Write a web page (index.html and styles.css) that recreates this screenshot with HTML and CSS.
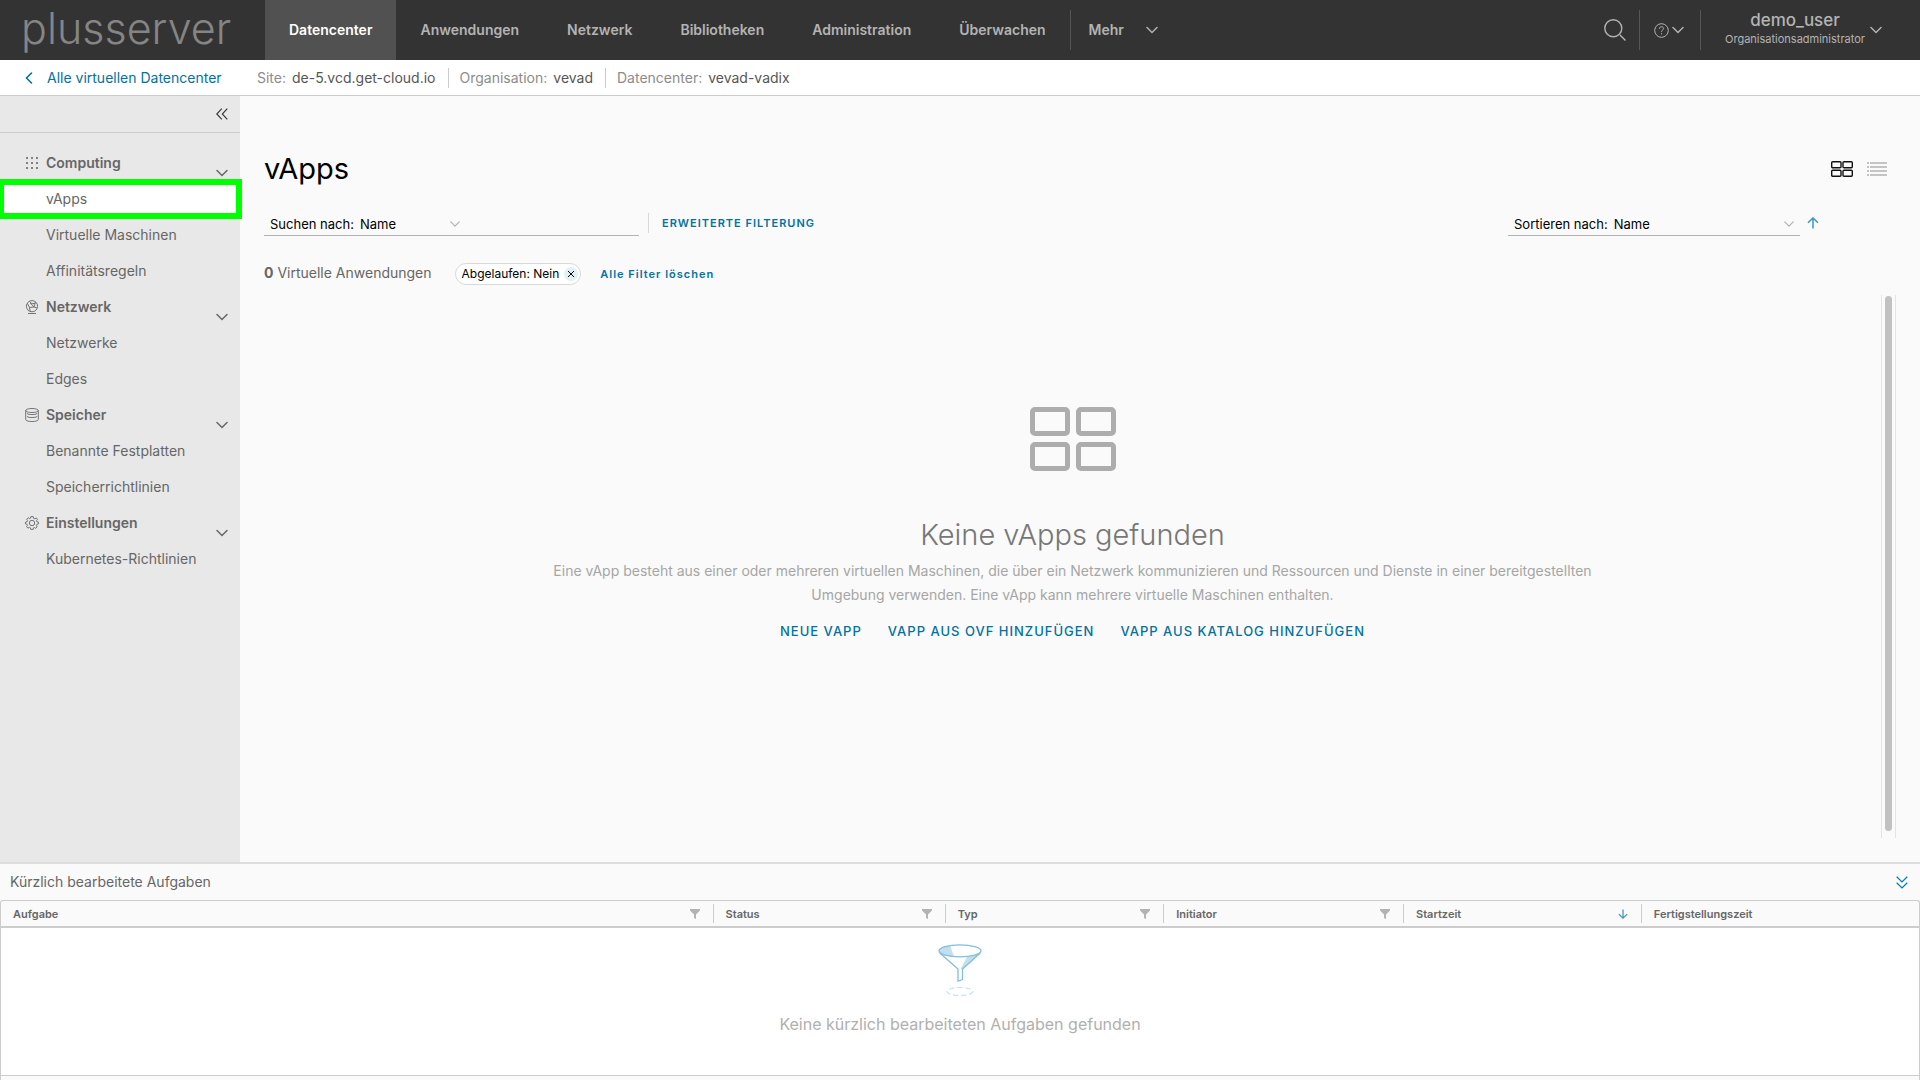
FILE: index.html
```html
<!DOCTYPE html>
<html lang="de">
<head>
<meta charset="utf-8">
<meta name="viewport" content="width=device-width, initial-scale=1">
<title>vApps – plusserver</title>
<link rel="stylesheet" href="styles.css">
</head>
<body>
<svg class="defs" aria-hidden="true">
  <symbol id="chevron" viewBox="0 0 12 8"><path d="M1 1.5 6 6.5 11 1.5" fill="none" stroke="currentColor" stroke-width="1.5" stroke-linecap="round"/></symbol>
  <symbol id="filter" viewBox="0 0 10 10"><path d="M0 0H10V1.5L6 5.5V10L4 9V5.5L0 1.5Z" fill="currentColor"/></symbol>
  <symbol id="arrow" viewBox="0 0 12 12"><path d="M6 11.5V1M1 5.8 6 1 11 5.8" fill="none" stroke="currentColor" stroke-width="1.5"/></symbol>
</svg>

<header class="topbar">
  <a class="brand" href="#">plusserver</a>
  <nav class="tabs" aria-label="Hauptnavigation">
    <a class="tab tab-active" href="#">Datencenter</a>
    <a class="tab" href="#">Anwendungen</a>
    <a class="tab" href="#">Netzwerk</a>
    <a class="tab" href="#">Bibliotheken</a>
    <a class="tab" href="#">Administration</a>
    <a class="tab" href="#">Überwachen</a>
    <button class="more" type="button">Mehr <svg class="chevron"><use href="#chevron"/></svg></button>
  </nav>
  <div class="tools">
    <button class="tool tool-search" type="button" aria-label="Suchen">
      <svg width="22" height="22" viewBox="0 0 22 22" fill="none" stroke="currentColor" stroke-width="1.4"><circle cx="9.3" cy="9.3" r="8.5"/><path d="M16 16 21.5 21.5"/></svg>
    </button>
    <button class="tool tool-help" type="button" aria-label="Hilfe">
      <svg width="15" height="15" viewBox="0 0 15 15" fill="none" stroke="currentColor"><circle cx="7.5" cy="7.5" r="6.8"/><path d="M5.3 5.8C5.3 4.4 6.3 3.8 7.5 3.8S9.6 4.5 9.6 5.6C9.6 7 7.5 7 7.5 8.8M7.5 10.2V11.4"/></svg>
      <svg class="chevron"><use href="#chevron"/></svg>
    </button>
    <button class="tool tool-user" type="button">
      <span class="user"><span class="user-name">demo_user</span><span class="user-role">Organisationsadministrator</span></span>
      <svg class="chevron"><use href="#chevron"/></svg>
    </button>
  </div>
</header>

<div class="context">
  <a class="back" href="#"><svg width="8" height="12" viewBox="0 0 8 12"><path d="M6.5 1 1.5 6 6.5 11" fill="none" stroke="currentColor" stroke-width="1.6" stroke-linecap="round"/></svg>Alle virtuellen Datencenter</a>
  <dl class="facts">
    <div class="fact"><dt>Site:</dt><dd>de-5.vcd.get-cloud.io</dd></div>
    <div class="fact"><dt>Organisation:</dt><dd>vevad</dd></div>
    <div class="fact"><dt>Datencenter:</dt><dd>vevad-vadix</dd></div>
  </dl>
</div>

<div class="workspace">
  <aside class="sidebar">
    <div class="sidebar-head">
      <button class="collapse" type="button" aria-label="Navigation einklappen"><svg width="12" height="12" viewBox="0 0 12 12" fill="none" stroke="currentColor" stroke-width="1.1"><path d="M5.8.7.8 6 5.8 11.3M11.3.7 6.3 6 11.3 11.3"/></svg></button>
    </div>
    <nav class="menu" aria-label="Datencenter">
      <button class="group" type="button">
        <svg width="14" height="14" viewBox="0 0 14 14" fill="currentColor"><path d="M1 1h2v2H1zM6 1h2v2H6zM11 1h2v2h-2zM1 6h2v2H1zM6 6h2v2H6zM11 6h2v2h-2zM1 11h2v2H1zM6 11h2v2H6zM11 11h2v2h-2z" opacity=".8"/></svg>
        Computing<svg class="chevron"><use href="#chevron"/></svg></button>
      <a class="item item-active" href="#">vApps</a>
      <a class="item" href="#">Virtuelle Maschinen</a>
      <a class="item" href="#">Affinitätsregeln</a>
      <button class="group" type="button">
        <svg width="14" height="14" viewBox="0 0 14 14" fill="none" stroke="currentColor" stroke-width=".9"><circle cx="7" cy="6.2" r="5.6"/><path d="M3 13.5H11M2.5 3.5 4.500 7.500 9 7 10.500 2M4.500 7.500 5 11.2M9 7 12 8M4.5 1.5 7 3.8 10.2 3.2M9 7 5.2 3"/></svg>
        Netzwerk<svg class="chevron"><use href="#chevron"/></svg></button>
      <a class="item" href="#">Netzwerke</a>
      <a class="item" href="#">Edges</a>
      <button class="group" type="button">
        <svg width="14" height="14" viewBox="0 0 14 14" fill="none" stroke="currentColor" stroke-width=".9"><ellipse cx="7" cy="2.5" rx="6.3" ry="2"/><path d="M.7 2.5V11.5C.7 14.2 13.3 14.2 13.3 11.5V2.5M2 5.6C4 6.9 10 6.9 12.2 5.6M2 8.6C4 9.9 10 9.9 12.2 8.6"/></svg>
        Speicher<svg class="chevron"><use href="#chevron"/></svg></button>
      <a class="item" href="#">Benannte Festplatten</a>
      <a class="item" href="#">Speicherrichtlinien</a>
      <button class="group" type="button">
        <svg width="14" height="14" viewBox="0 0 14 14" fill="none" stroke="currentColor" stroke-width=".9"><path d="M5.8.6H8.2L8.6 2.3 9.8 2.8 11.3 1.9 12.4 3.5 11.5 4.7 11.8 5.7 13.4 6V8L11.8 8.4 11.4 9.6 12.2 11 10.6 12.3 9.4 11.5 8.5 11.8 8.2 13.4H5.8L5.4 11.8 4.3 11.3 3 12.2 1.6 10.7 2.5 9.4 2.1 8.4.6 8V6L2.2 5.6 2.6 4.5 1.7 3.2 3.2 1.7 4.5 2.6 5.5 2.2Z"/><circle cx="7" cy="7" r="2.7"/></svg>
        Einstellungen<svg class="chevron"><use href="#chevron"/></svg></button>
      <a class="item" href="#">Kubernetes-Richtlinien</a>
    </nav>
  </aside>

  <main class="main">
    <div class="title-row">
      <h1>vApps</h1>
      <div class="views">
        <button class="view view-on" type="button" aria-label="Kartenansicht"><svg width="22" height="16" viewBox="0 0 22 16" fill="none" stroke="currentColor" stroke-width="1.4"><rect x=".7" y=".7" width="9.3" height="6" rx="1"/><rect x="12" y=".7" width="9.3" height="6" rx="1"/><rect x=".7" y="9.3" width="9.3" height="6" rx="1"/><rect x="12" y="9.3" width="9.3" height="6" rx="1"/></svg></button>
        <button class="view" type="button" aria-label="Listenansicht"><svg width="20" height="14" viewBox="0 0 20 14" fill="currentColor"><path d="M0 0h2v2H0zM3 0h17v2H3zM0 4h2v2H0zM3 4h17v2H3zM0 8h2v2H0zM3 8h17v2H3zM0 12h2v2H0zM3 12h17v2H3z"/></svg></button>
      </div>
    </div>

    <div class="filter-row">
      <div class="field field-search">
        <label for="search-by">Suchen nach:</label>
        <span class="select"><select id="search-by"><option>Name</option></select><svg class="chevron"><use href="#chevron"/></svg></span>
        <input class="query" type="text" aria-label="Suchbegriff">
      </div>
      <button class="link link-advanced" type="button">ERWEITERTE FILTERUNG</button>
      <div class="field field-sort">
        <label for="sort-by">Sortieren nach:</label>
        <span class="select"><select id="sort-by"><option>Name</option></select><svg class="chevron"><use href="#chevron"/></svg></span>
      </div>
      <button class="sort-dir" type="button" aria-label="Aufsteigend"><svg width="12" height="12"><use href="#arrow"/></svg></button>
    </div>

    <div class="result-row">
      <p class="count"><strong>0</strong> Virtuelle Anwendungen</p>
      <span class="chip">Abgelaufen: Nein
        <button class="chip-x" type="button" aria-label="Filter entfernen"><svg width="8" height="8" viewBox="0 0 8 8"><path d="M1 1 7 7M7 1 1 7" stroke="currentColor"/></svg></button>
      </span>
      <button class="link" type="button">Alle Filter löschen</button>
    </div>

    <div class="results">
      <section class="empty">
        <svg width="86" height="64" viewBox="0 0 86 64" fill="none" stroke="#adadad" stroke-width="5"><rect x="2.5" y="2.5" width="35" height="24" rx="2.5"/><rect x="48.500" y="2.5" width="35" height="24" rx="2.5"/><rect x="2.5" y="37.500" width="35" height="24" rx="2.5"/><rect x="48.500" y="37.500" width="35" height="24" rx="2.5"/></svg>
        <h2>Keine vApps gefunden</h2>
        <p>Eine vApp besteht aus einer oder mehreren virtuellen Maschinen, die über ein Netzwerk kommunizieren und Ressourcen und Dienste in einer bereitgestellten Umgebung verwenden. Eine vApp kann mehrere virtuelle Maschinen enthalten.</p>
        <div class="actions">
          <button class="action" type="button">NEUE VAPP</button>
          <button class="action" type="button">VAPP AUS OVF HINZUFÜGEN</button>
          <button class="action" type="button">VAPP AUS KATALOG HINZUFÜGEN</button>
        </div>
      </section>
      <div class="scroll"><div class="thumb"></div></div>
    </div>
  </main>
</div>

<section class="tasks">
  <div class="tasks-head">
    <h2>Kürzlich bearbeitete Aufgaben</h2>
    <button class="tasks-toggle" type="button" aria-label="Aufgaben einklappen"><svg width="12" height="13" viewBox="0 0 12 13" fill="none" stroke="currentColor" stroke-width="1.2"><path d="M.7.800 6 6 11.3.800M.7 6.800 6 12 11.3 6.800"/></svg></button>
  </div>
  <table class="grid">
    <thead>
      <tr>
        <th class="c-task"><div class="head">Aufgabe<svg class="funnel"><use href="#filter"/></svg></div></th>
        <th class="c-status"><div class="head">Status<svg class="funnel"><use href="#filter"/></svg></div></th>
        <th class="c-type"><div class="head">Typ<svg class="funnel"><use href="#filter"/></svg></div></th>
        <th class="c-init"><div class="head">Initiator<svg class="funnel"><use href="#filter"/></svg></div></th>
        <th class="c-start"><div class="head">Startzeit<svg class="down" width="10" height="12"><use href="#arrow"/></svg></div></th>
        <th><div class="head">Fertigstellungszeit</div></th>
      </tr>
    </thead>
    <tbody>
      <tr>
        <td colspan="6">
          <div class="no-tasks">
            <svg width="44" height="53" viewBox="0 0 44 53" fill="none" stroke="#7fbedd" stroke-width="1.3">
              <path d="M1 6.5C1 4 6 2 12 1.5L16 12.500C8 12 1 9.500 1 6.500Z" fill="#c3dfee" stroke="none"/>
              <path d="M42 10 25 25H22.500L29 13Z" fill="#c3dfee" stroke="none"/>
              <ellipse cx="22" cy="6.800" rx="21" ry="6"/>
              <path d="M1.800 9 20 25V37L24.500 35.500V25L42.200 9"/>
              <ellipse cx="22" cy="47.500" rx="13" ry="4" stroke="#b9dbec" stroke-width="1" stroke-dasharray="5 3"/>
            </svg>
            Keine kürzlich bearbeiteten Aufgaben gefunden
          </div>
        </td>
      </tr>
    </tbody>
  </table>
  <div class="grid-foot"></div>
</section>
</body>
</html>
```

FILE: styles.css
```css
* { box-sizing: border-box; }

body {
  margin: 0;
  height: 100vh;
  display: flex;
  flex-direction: column;
  overflow: hidden;
  background: #fafafa;
  color: #666;
  font: 14px/24px Inter, "Noto Sans", sans-serif;
}

h1, h2, p, dl, dd { margin: 0; font-weight: 400; }
a { color: inherit; text-decoration: none; }
svg { flex: none; }
button, select, input {
  margin: 0;
  padding: 0;
  border: 0;
  background: none;
  color: inherit;
  font: inherit;
  letter-spacing: inherit;
}
button { cursor: pointer; }
select { appearance: none; }
.defs { position: absolute; width: 0; height: 0; }
.chevron { width: 12px; height: 8px; }

/* Top bar */
.topbar {
  flex: none;
  display: flex;
  align-items: center;
  height: 60px;
  background: #333;
  color: #b3b3b3;
}
.brand {
  align-self: flex-start;
  width: 265px;
  padding-left: 21px;
  color: #858585;
  font-size: 43px;
  font-weight: 300;
  line-height: 56px;
}
.tabs { display: flex; align-items: center; font-weight: 600; }
.tab { padding: 0 24px; line-height: 60px; }
.tab-active { background: #515151; color: #fff; }
.more {
  display: flex;
  align-items: center;
  gap: 22px;
  height: 40px;
  padding-left: 18px;
  border-left: 1px solid #565656;
}
.tools { display: flex; align-items: center; margin-left: auto; padding-right: 38px; }
.tool { display: flex; align-items: center; height: 40px; }
.tool + .tool { border-left: 1px solid #565656; }
.tool-search { padding-right: 13px; }
.tool-help { gap: 3px; padding: 0 16px 0 14px; }
.tool-user { gap: 3px; padding-left: 22px; }
.user { display: flex; flex-direction: column; align-items: center; min-width: 144px; padding-bottom: 2px; }
.user-name { font-size: 17px; font-weight: 500; line-height: 20px; }
.user-role { font-size: 11px; line-height: 18px; }

/* Context bar */
.context {
  flex: none;
  display: flex;
  align-items: center;
  height: 36px;
  border-bottom: 1px solid #ccc;
  background: #fff;
}
.back {
  display: flex;
  align-items: center;
  gap: 14px;
  width: 245px;
  padding-left: 25px;
  color: #0072a3;
}
.facts { display: flex; align-items: center; }
.fact { display: flex; gap: 6px; height: 20px; padding: 0 12px; line-height: 20px; }
.fact + .fact { padding-left: 11px; border-left: 1px solid #ccc; }
.fact dt { color: #8c8c8c; }
.fact dd { color: #565656; }

/* Sidebar */
.workspace { flex: 1; display: flex; min-height: 0; }
.sidebar { flex: none; width: 240px; background: #e8e8e8; }
.sidebar-head {
  display: flex;
  justify-content: flex-end;
  height: 37px;
  padding-right: 12px;
  border-bottom: 1px solid #ccc;
}
.collapse { display: flex; align-items: center; color: #333; }
.menu { display: flex; flex-direction: column; padding-top: 12px; }
.group {
  display: flex;
  align-items: center;
  gap: 7px;
  height: 36px;
  padding: 0 12px 0 25px;
  font-weight: 600;
}
.group .chevron { align-self: flex-end; margin: 0 0 4px auto; }
.item { height: 36px; padding-left: 46px; line-height: 36px; }
.item-active { position: relative; background: #fff; }
.item-active::after {
  content: "";
  position: absolute;
  inset: -2px -2px -2px 0;
  border: 6px solid #0f0;
  border-left-width: 4px;
}

/* Main area */
.main {
  flex: 1;
  display: flex;
  flex-direction: column;
  min-width: 0;
  padding: 55px 24px 24px;
}
.title-row { display: flex; align-items: center; justify-content: space-between; height: 36px; }
h1 { color: #000; font-size: 29px; line-height: 36px; }
.views { display: flex; align-items: center; gap: 14px; padding-right: 9px; }
.view { display: flex; color: #c4c4c4; }
.view-on { color: #111; }

.filter-row { display: flex; align-items: center; margin-top: 23px; padding-right: 77px; }
.field {
  display: flex;
  align-items: center;
  gap: 6px;
  height: 26px;
  padding: 2px 6px 0;
  border-bottom: 1px solid #b3b3b3;
  color: #000;
  font-size: 13px;
}
.field-search { width: 375px; }
.field-sort { width: 292px; margin-left: auto; }
.select { display: grid; align-items: center; width: 100px; }
.field-sort .select { flex: 1; }
.select select, .select .chevron { grid-area: 1 / 1; }
.select .chevron { justify-self: end; width: 10px; color: #b3b3b3; pointer-events: none; }
.query { flex: 1; min-width: 0; }
.link {
  color: #0072a3;
  font-size: 11px;
  font-weight: 600;
  letter-spacing: 1px;
}
.link-advanced {
  height: 20px;
  margin-left: 9px;
  padding-left: 13px;
  border-left: 1px solid #d9d9d9;
  line-height: 20px;
}
.sort-dir { display: flex; margin-left: 7px; color: #3b97c0; }

.result-row { display: flex; align-items: center; gap: 19px; height: 36px; margin-top: 20px; }
.count { margin-right: 4px; line-height: 24px; padding-bottom: 2px; }
.chip {
  display: flex;
  align-items: center;
  gap: 5px;
  height: 22px;
  padding: 0 2px 0 6px;
  border: 1px solid #d9d9d9;
  border-radius: 11px;
  background: #fff;
  color: #000;
  font-size: 12px;
}
.chip-x {
  display: flex;
  align-items: center;
  justify-content: center;
  width: 14px;
  height: 14px;
  border-radius: 50%;
  background: #e1f1f6;
}

.results { flex: 1; display: flex; min-height: 0; margin-top: 3px; }
.empty {
  flex: 1;
  display: flex;
  flex-direction: column;
  align-items: center;
  padding-top: 112px;
  color: #a6a6a6;
  text-align: center;
}
.empty h2 { margin-top: 46px; color: #777; font-size: 29px; font-weight: 300; line-height: 36px; }
.empty p { max-width: 1090px; margin-top: 6px; }
.actions { display: flex; gap: 26px; margin-top: 12px; }
.action { color: #0072a3; font-size: 13px; font-weight: 500; letter-spacing: 1px; }
.scroll {
  width: 15px;
  padding: 1px 3px 7px;
  border: 1px solid #e4e4e4;
  border-width: 0 1px;
}
.thumb { height: 100%; border-radius: 4px; background: #c1c1c1; }

/* Recent tasks */
.tasks { flex: none; border-top: 2px solid #ddd; }
.tasks-head { display: flex; align-items: center; justify-content: space-between; height: 36px; padding: 0 12px 0 10px; }
.tasks-head h2 { font-size: 14px; }
.tasks-toggle { display: flex; color: #0079b8; }
.grid {
  width: 100%;
  border: 1px solid #ccc;
  border-bottom: 0;
  border-radius: 3px 3px 0 0;
  border-spacing: 0;
  table-layout: fixed;
}
.grid th { height: 27px; padding: 0; border-bottom: 2px solid #ccc; font-size: 11px; font-weight: 600; text-align: left; }
.head {
  display: flex;
  align-items: center;
  justify-content: space-between;
  height: 19px;
  padding: 0 13px 0 12px;
  border-left: 1px solid #ccc;
}
.c-task .head { border-left-color: transparent; padding-left: 11px; }
.c-task { width: 37.1%; }
.c-status { width: 12.1%; }
.c-type { width: 11.4%; }
.c-init { width: 12.5%; }
.c-start { width: 12.4%; }
.funnel { width: 10px; height: 10px; color: #b3b3b3; }
.down { color: #3b97c0; transform: rotate(180deg); }
.grid td { height: 147px; padding: 16px 0 0; background: #fff; vertical-align: top; }
.no-tasks {
  display: flex;
  flex-direction: column;
  align-items: center;
  gap: 15px;
  color: #b0b0b0;
  font-size: 16px;
}
.grid-foot { height: 5px; border: 1px solid #ccc; border-bottom: 0; }
```
